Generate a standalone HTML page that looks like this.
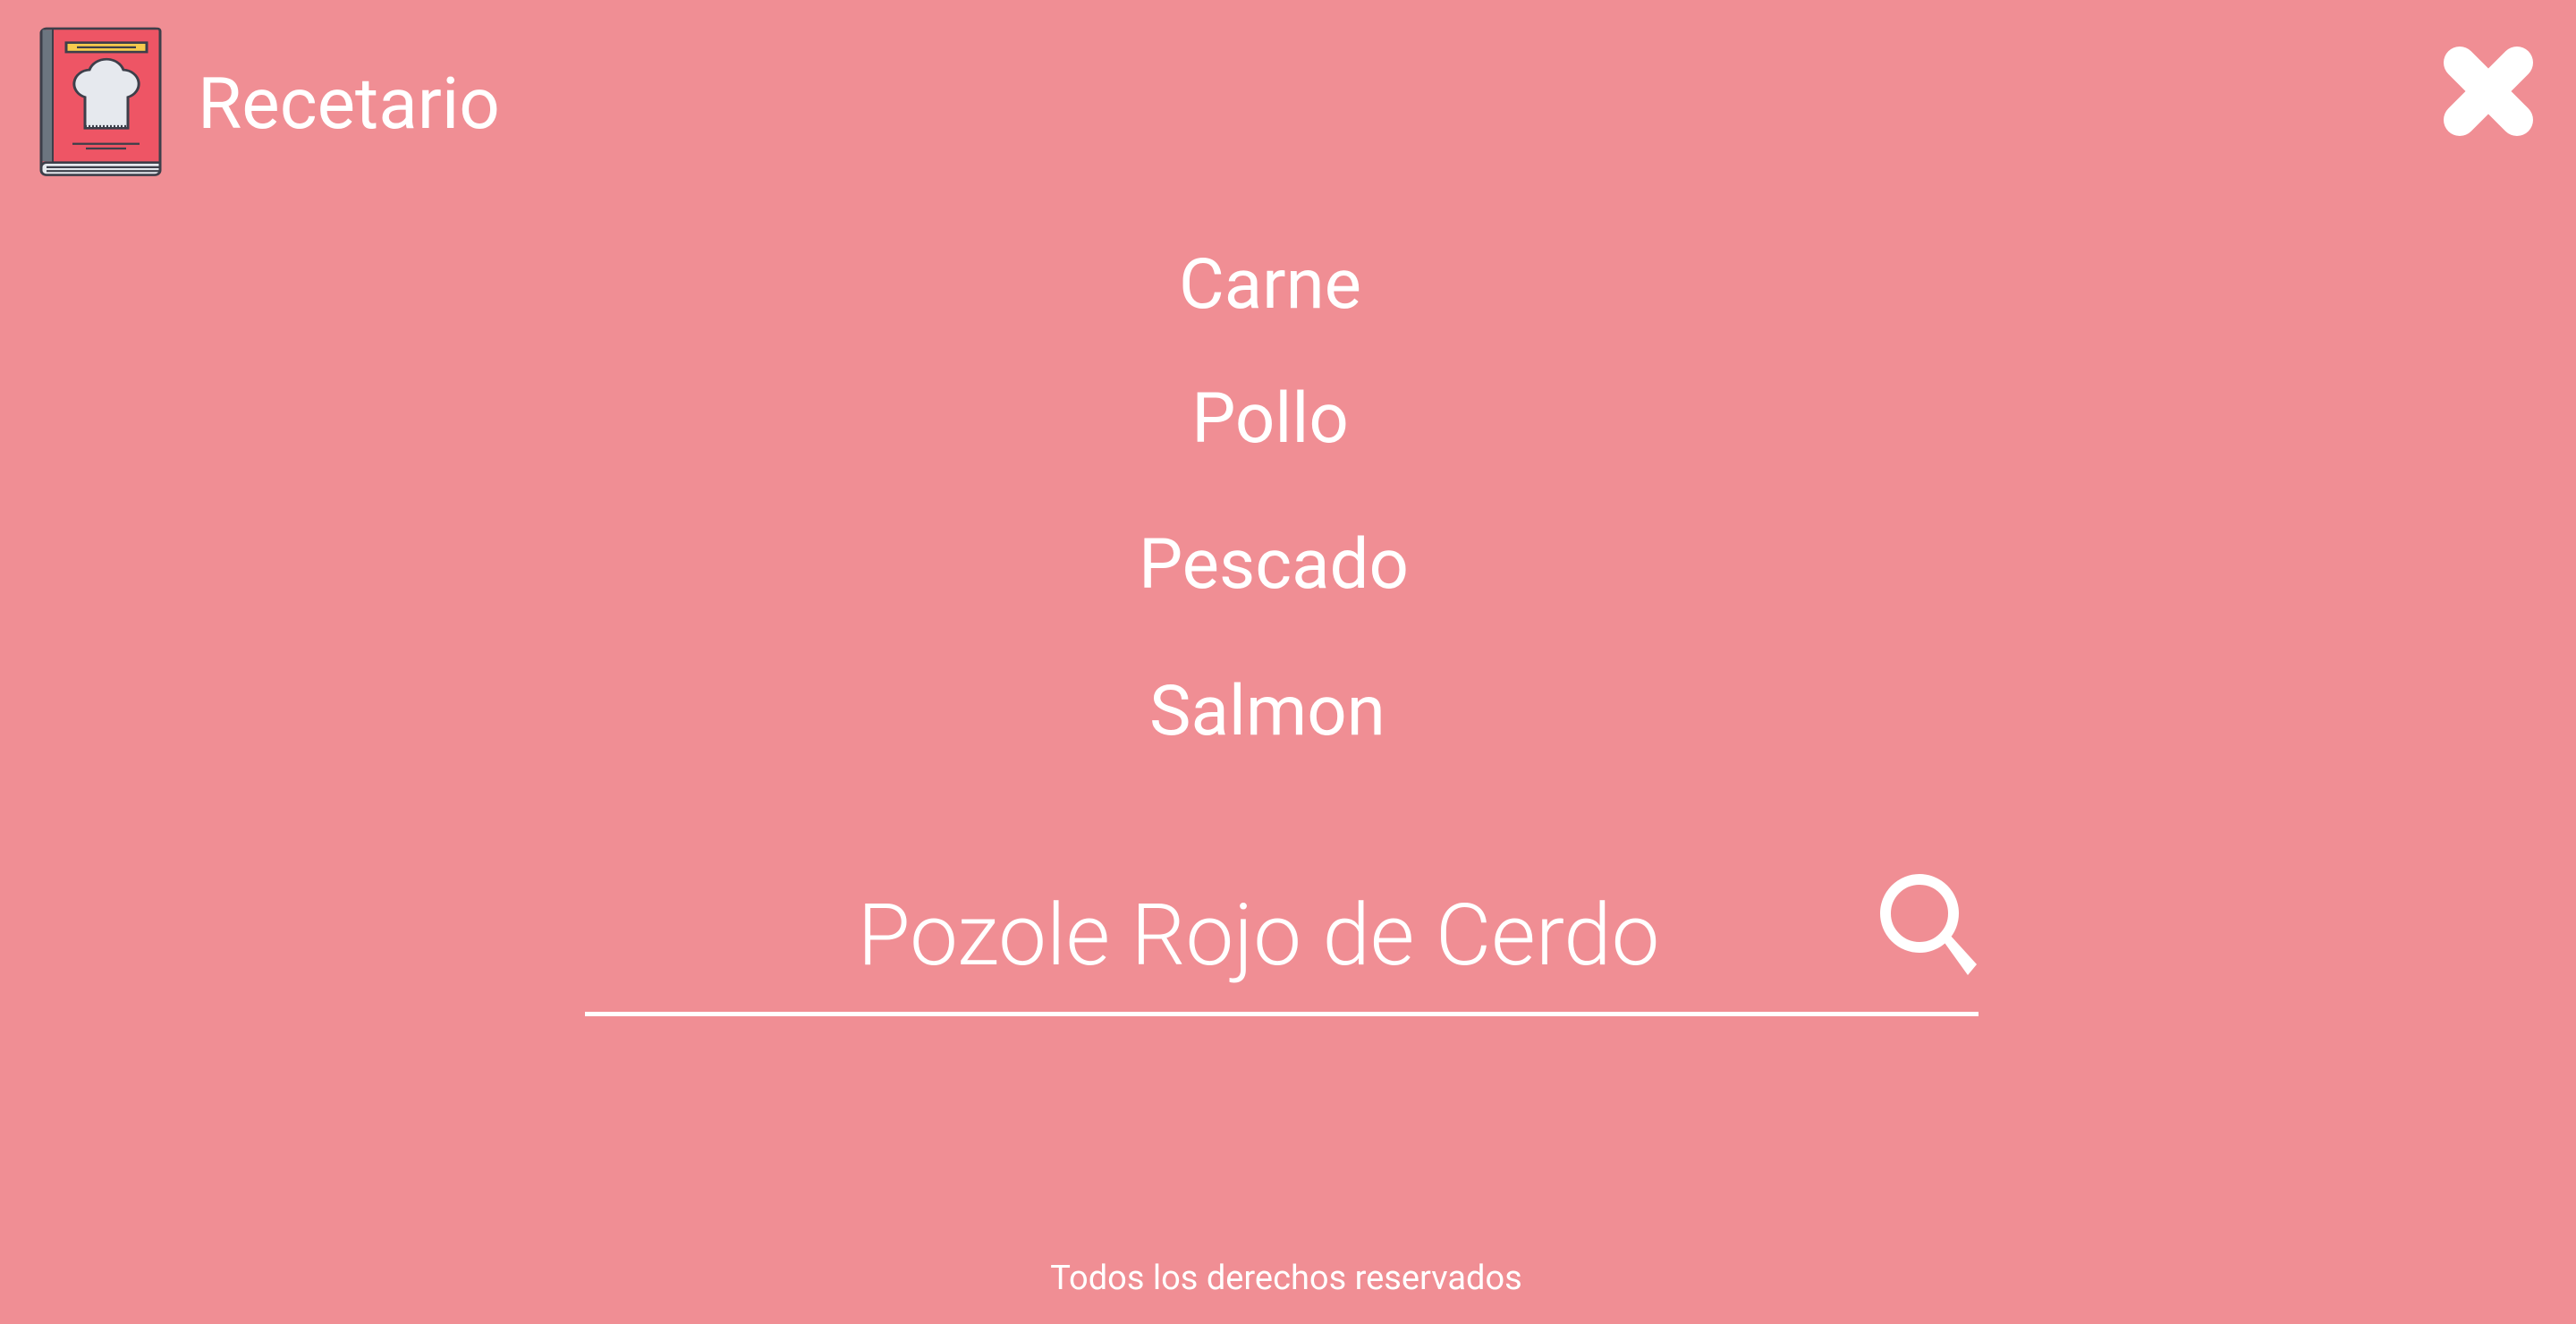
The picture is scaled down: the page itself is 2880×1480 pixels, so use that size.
<!DOCTYPE html>
<html><head><meta charset="utf-8"><style>
html,body{margin:0;padding:0}
body{width:2880px;height:1480px;background:#F08E94;position:relative;overflow:hidden;font-family:"Roboto","Liberation Sans",sans-serif;color:#fff}
.t{position:absolute;white-space:nowrap;line-height:1}
.m{position:absolute;left:0;width:2840px;text-align:center;font-size:78px;line-height:1}
</style></head><body>
<svg style="position:absolute;left:0;top:0" width="240" height="240" viewBox="0 0 240 240">
  <g transform="translate(0,32) scale(1,0.87) translate(0,-38)">
  <rect x="46" y="38" width="133" height="188" rx="6" fill="#E6E9EE" stroke="#3D3F4A" stroke-width="3"/>
  <path d="M52 38 H176 a3 3 0 0 1 3 3 V210 H52 a6 6 0 0 0 -6 6 V44 a6 6 0 0 1 6 -6z" fill="#EE5565" stroke="#3D3F4A" stroke-width="3"/>
  <rect x="47.5" y="39.5" width="11" height="169" fill="#6C7680"/>
  <line x1="59" y1="39" x2="59" y2="210" stroke="#3D3F4A" stroke-width="2"/>
  <line x1="52" y1="216" x2="178" y2="216" stroke="#3D3F4A" stroke-width="2.5"/>
  <line x1="52" y1="221" x2="178" y2="221" stroke="#3D3F4A" stroke-width="2.5"/>
  <rect x="74" y="56" width="90" height="12" fill="#F7CB4D" stroke="#3D3F4A" stroke-width="3"/>
  <line x1="86" y1="62" x2="152" y2="62" stroke="#3D3F4A" stroke-width="2.5"/>
  <path d="M95 136 V126 a18 18 0 0 1 5 -35 a20 20 0 0 1 38 0 a18 18 0 0 1 5 35 V166 H95z" fill="#E6E9EE" stroke="#3D3F4A" stroke-width="3"/>
  <line x1="95" y1="164" x2="143" y2="164" stroke="#3D3F4A" stroke-width="4" stroke-dasharray="2 2"/>
  <line x1="81" y1="186" x2="156" y2="186" stroke="#3D3F4A" stroke-width="2.5"/>
  <line x1="96" y1="192" x2="141" y2="192" stroke="#3D3F4A" stroke-width="2.5"/>
  </g>
</svg>
<div class="t" style="left:221px;top:76px;font-size:80px">Recetario</div>
<svg style="position:absolute;left:2700px;top:30px" width="160" height="150">
  <path d="M50 40 L114 104 M114 40 L50 104" stroke="#fff" stroke-width="36" stroke-linecap="round"/>
</svg>
<div class="m" style="top:280px">Carne</div>
<div class="m" style="top:430px;padding-left:0">Pollo</div>
<div class="m" style="top:593px;padding-left:4px">Pescado</div>
<div class="m" style="top:757px;padding-left:0;left:-3px">Salmon</div>
<div class="t" style="left:652px;width:1510px;text-align:center;top:998px;font-size:96px;font-weight:300">Pozole Rojo de Cerdo</div>
<svg style="position:absolute;left:2090px;top:965px" width="140" height="140">
  <circle cx="56" cy="56" r="38" fill="none" stroke="#fff" stroke-width="12"/>
  <path d="M82 86 L90 80 L120 113 L110 125z" fill="#fff"/>
</svg>
<div style="position:absolute;left:654px;top:1131px;width:1558px;height:5px;background:#fff"></div>
<div class="t" style="left:0;width:2876px;text-align:center;top:1410px;font-size:38px">Todos los derechos reservados</div>
</body></html>
